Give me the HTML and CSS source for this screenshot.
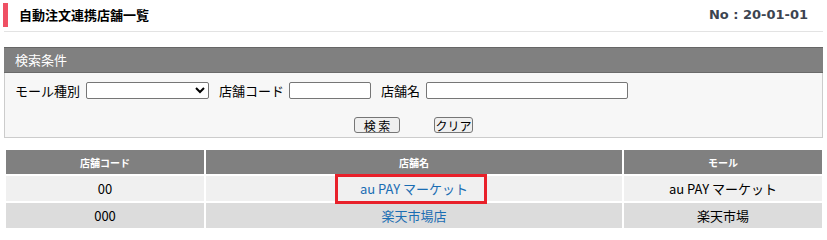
FILE: index.html
```html
<!DOCTYPE html>
<html lang="ja">
<head>
<meta charset="utf-8">
<title>自動注文連携店舗一覧</title>
<link rel="stylesheet" href="styles.css">
</head>
<body>
<div class="page">
  <div class="titlebar">
    <h1 class="title">自動注文連携店舗一覧</h1>
    <span class="doc-no">No : 20-01-01</span>
  </div>

  <div class="search">
    <div class="search-head">検索条件</div>
    <div class="search-body">
      <div class="fields">
        <span class="label">モール種別</span>
        <select class="ctl select-mall"><option></option></select>
        <span class="label">店舗コード</span>
        <input class="ctl input-code" type="text">
        <span class="label">店舗名</span>
        <input class="ctl input-name" type="text">
      </div>
      <div class="buttons">
        <button class="btn btn-search" type="button">検 索</button>
        <button class="btn btn-clear" type="button">クリア</button>
      </div>
    </div>
  </div>

  <table class="list">
    <colgroup>
      <col class="col-code">
      <col class="col-name">
      <col class="col-mall">
    </colgroup>
    <thead>
      <tr><th>店舗コード</th><th>店舗名</th><th>モール</th></tr>
    </thead>
    <tbody>
      <tr class="odd"><td>00</td><td><a class="shop-link" href="#">au PAY マーケット</a></td><td>au PAY マーケット</td></tr>
      <tr class="even"><td>000</td><td><a class="shop-link" href="#">楽天市場店</a></td><td>楽天市場</td></tr>
    </tbody>
  </table>

  <div class="highlight"></div>
</div>
</body>
</html>
```

FILE: styles.css
```css
html, body {
  margin: 0;
  padding: 0;
  background: #ffffff;
}

body {
  font-family: "Noto Sans CJK JP", "Noto Sans", sans-serif;
  font-size: 13px;
  color: #000;
}

.page {
  position: relative;
  padding: 0 4px;
}

.titlebar {
  display: flex;
  align-items: center;
  justify-content: space-between;
  padding: 3px 0 4px;
  border-bottom: 1px solid #e3e3e3;
}

.title {
  margin: 0 0 0 -1px;
  height: 24px;
  line-height: 24px;
  border-left: 5px solid #ef5064;
  padding-left: 11px;
  font-size: 13px;
  font-weight: bold;
}

.doc-no {
  font-family: "DejaVu Sans", Verdana, sans-serif;
  font-weight: bold;
  font-size: 13px;
  color: #3c4450;
  margin-right: 15px;
  margin-top: -2px;
}

.search {
  margin-top: 15px;
}

.search-head {
  background: #808080;
  border-top: 1px solid #666666;
  border-bottom: 1px solid #6a6a6a;
  height: 24px;
  line-height: 24px;
  color: #ffffff;
  font-size: 13px;
  padding-left: 11px;
}

.search-body {
  background: #f7f7f7;
  border: 1px solid #cccccc;
  border-top: none;
  height: 64px;
  padding: 0 0 0 10px;
}

.fields {
  display: flex;
  align-items: center;
  padding-top: 9px;
  height: 17px;
}

.label {
  margin-right: 6px;
  line-height: 17px;
}

.ctl {
  box-sizing: border-box;
  height: 17px;
  margin: 0 10px 0 0;
  border: 1px solid #767676;
  border-radius: 2px;
  background: #ffffff;
  font-family: "Noto Sans CJK JP", sans-serif;
  font-size: 12px;
  padding: 0 2px;
}

.select-mall { width: 123px; }
.input-code { width: 82px; margin-left: -1px; }
.input-name { width: 202px; }

.buttons {
  display: flex;
  justify-content: center;
  gap: 34px;
  margin-top: 18px;
  padding-right: 10px;
}

.btn {
  box-sizing: border-box;
  height: 16px;
  padding: 0;
  border: 1px solid #767676;
  border-radius: 3px;
  background: #efefef;
  font-family: "Noto Sans CJK JP", sans-serif;
  font-size: 12px;
  line-height: 13px;
  color: #000;
}

.btn-search { width: 46px; }
.btn-clear { width: 39px; }

.list {
  margin-top: 10px;
  border-spacing: 2px;
  table-layout: fixed;
  width: 820px;
}

.col-code { width: 198px; }
.col-name { width: 416px; }
.col-mall { width: 198px; }

.list th {
  background: #808080;
  color: #ffffff;
  font-size: 10px;
  font-weight: bold;
  height: 24px;
  padding: 0;
  text-align: center;
}

.list td {
  height: 25px;
  padding: 0;
  text-align: center;
  font-size: 13px;
}

.odd td { background: #f0f0f0; }
.even td { background: #dcdcdc; }

.shop-link {
  color: #1a6db3;
  text-decoration: none;
}

.highlight {
  position: absolute;
  left: 335px;
  top: 174px;
  width: 152px;
  height: 30px;
  box-sizing: border-box;
  border: 3px solid #e8202a;
}
```
